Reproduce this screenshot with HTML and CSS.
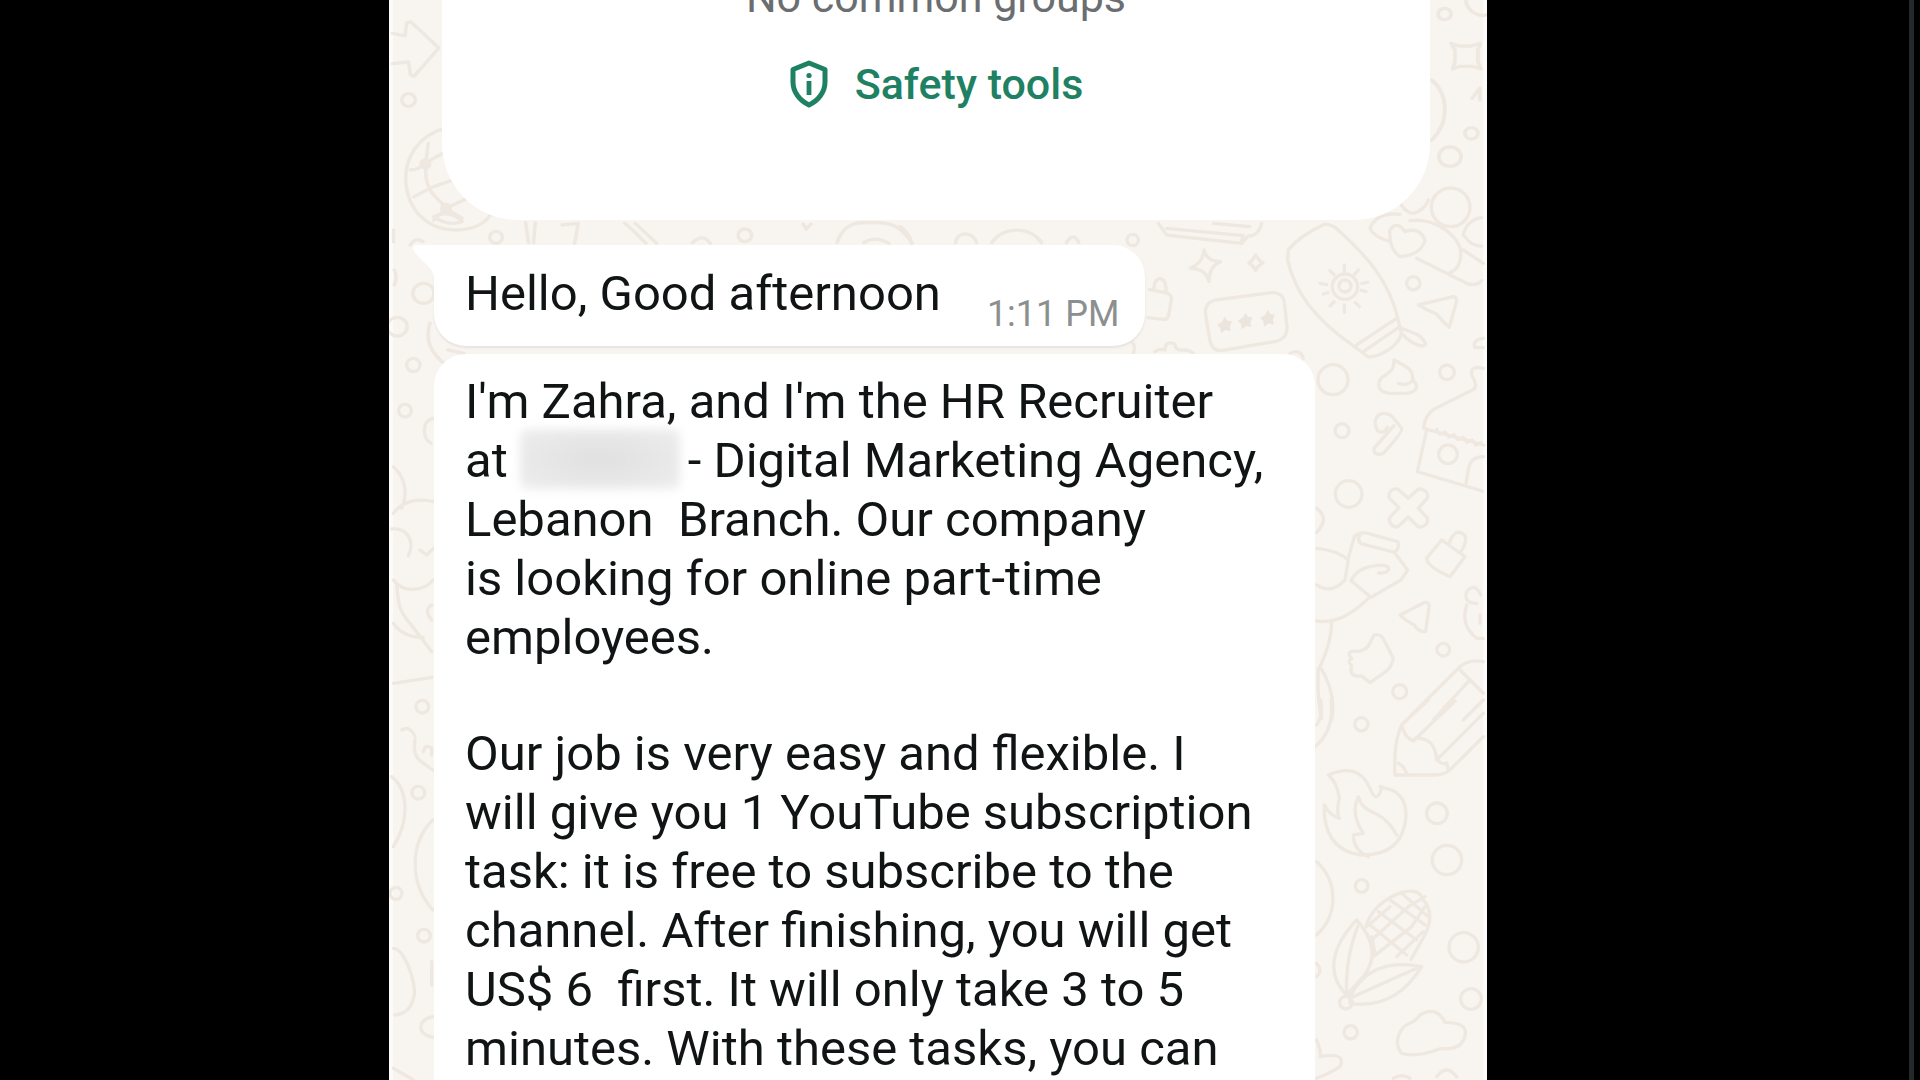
FILE: index.html
```html
<!DOCTYPE html>
<html lang="en">
<head>
<meta charset="utf-8">
<title>Chat</title>
<link rel="stylesheet" href="styles.css">
</head>
<body>
<main class="chat">
  <svg class="wallpaper" viewBox="389 0 1098 1080" preserveAspectRatio="xMidYMin slice" aria-hidden="true">
    <!-- left margin -->
    <g transform="translate(380 0) scale(.3571 .3333)">
      <path d="M35 100l35 8 5-40 12-2 78 78-70 85-10-5-5-38-45 5"/>
      <circle cx="80" cy="300" r="19"/>
      <path d="M180 385C100 410 70 480 72 540c4 90 60 150 140 150 50 0 85-20 100-50M135 430l-5 45M85 510q25 0 40-20l50-30M130 490c-10 70 20 100 55 130M95 590l55-30 55-20M185 625l60-30M150 660l35-35 45 30M150 650c25-15 60-10 80 15q-40 15-80-15z"/>
      <circle cx="127" cy="492" r="12"/><circle cx="185" cy="625" r="12"/>
      <circle cx="325" cy="712" r="18"/>
      <path d="M408 668l8 60M435 668l-5 60M510 675l45-5-10 60M685 670c25 20 40 40 60 60M715 670l60 60M875 728q30-30 50 2M1185 672l8 16 14-16M1280 728c20-70 70-60 110-60s70 10 100 62M1355 728q30-22 70 2"/>
      <circle cx="1022" cy="706" r="19"/>
      <path d="M38 690v35M85 735q15-25 35-10M40 810q10 20 0 45M140 970c-15 50 0 90 50 130M190 1050l45 10-35 25"/>
      <circle cx="122" cy="880" r="30"/><circle cx="48" cy="980" r="28"/>
    </g>
    <g transform="translate(380 330) scale(.3333)">
      <circle cx="100" cy="105" r="20"/><circle cx="75" cy="242" r="19"/>
      <path d="M158 265c-35 10-30 60-5 75M40 410c35 30 45 80 25 125M40 550c30-40 80-45 120-35M35 597c50-5 70 40 50 80M120 660l20 15 20-20M40 750c30 40 90 35 120 0M50 760c5 60 5 80 40 120l65 85M40 880c20 30 60 45 90 42M155 825q-25 15 0 45M40 1060l115-18"/>
    </g>
    <g transform="translate(380 400) scale(.3333)">
      <circle cx="127" cy="920" r="19"/><path d="M65 990q25-15 40 20"/>
    </g>
    <g transform="translate(380 740) scale(.3333)">
      <path d="M105 0c-5 30 0 50 15 62l38 28M130 35q5-25 25-10v20M35 110c50 40 55 130 5 210M158 240c-70 70-70 190 0 270M40 625c30 0 60 80 64 130-5 50-30 68-60 70M158 830c-50 10-45 55 0 62M155 665v70M40 985l60 35"/>
      <circle cx="115" cy="158" r="19"/><circle cx="132" cy="587" r="19"/><circle cx="48" cy="460" r="18"/>
    </g>
    <!-- strip between the cards and upper right -->
    <g transform="translate(900 0) scale(.3827 .3333)">
      <path d="M0 680q25 20 30 50M145 728c5-35 45-35 55 0M240 728c30-50 100-50 130 0M435 728q18-35 32 0"/>
      <circle cx="1423" cy="42" r="17"/>
      <path d="M1478 0c5 40 40 50 52 45M1440 130l20 8h32l24-8-6 20v35l8 22-22-8h-34l-18 8 6-22v-35zM1390 240c45 45 45 130 0 180M1495 295l20-30v35"/>
      <circle cx="1493" cy="400" r="17"/><circle cx="1437" cy="470" r="29"/>
    </g>
    <g transform="translate(1130 200) scale(.3333)">
      <circle cx="8" cy="120" r="17"/>
      <path d="M85 70l25 35 225 25 20-22c20 0 35-15 40-38M110 85l230 22-8 22M250 70l110 10"/>
      <path d="M222 150c5 20 20 35 50 35-25 10-35 30-35 60-5-25-20-40-57-40 25-10 40-25 42-55z"/>
      <path d="M377 165q12 20 22 24-16 8-22 22-6-14-20-22 12-8 20-24z"/>
      <path d="M58 268l48 10q20 5 18 20l-8 48q-5 14-15 12l-48-5M72 265c0-40 40-40 36 10"/>
      <path d="M255 300l170-22q32-2 38 28l8 75q2 32-28 42l-165 28q-30 4-38-28l-14-85q0-30 29-38z"/>
      <path class="solid" d="M285 350l7 12 14 2-6 14 2 16-15-4-14 10-2-16-10-10 14-8zM347 338l7 12 14 2-6 14 2 16-15-4-14 10-2-16-10-10 14-8zM414 330l7 12 14 2-6 14 2 16-15-4-14 10-2-16-10-10 14-8z"/>
      <path d="M475 150q30-40 105-76 20-4 40 12c90 80 160 160 185 275l10 40c-10 35-60 70-100 70l-40-30c-130-90-180-170-202-260zM680 435l120-80M700 455l110-75M815 385l50 20q30 25 18 32-30 5-70-38"/>
      <circle cx="645" cy="260" r="38"/><circle cx="645" cy="258" r="18"/>
      <path d="M643 195v18M643 315v22M570 250l20 4M695 250l18-3M600 212l12 12M685 210l-12 14M600 318l12-12M688 320l-12-12M580 282l14-4M708 275l-14-4"/>
      <path d="M720 85q20-50 90-42M720 85q10 25 60 40M780 90q20-30 45 5 45-15 60 25-10 45-75 50-35-25-30-80zM840 62c60-10 130 30 150 80 10 40-10 70-30 75M860 175l150 75q30 10 45-8M1000 150l60 40M1000 105q10-45 55-52M1005 110q20 30 50 28M810 5q10 30 40 35 35-10 45-40"/>
      <circle cx="962" cy="22" r="58"/><circle cx="850" cy="250" r="20"/>
      <path d="M865 315l105-25q12 2 10 14l-22 78q-25-22-38-40-30-10-55-27z"/>
      <path d="M1060 415q-35 5-25 28h25M0 420q20 15 10 40M75 455q10-10 30-5 0-30 30-18 0 20 25 18 20 0 30 10M480 460q30-15 40 15"/>
    </g>
    <!-- right margin -->
    <g transform="translate(1290 340) scale(.3333)">
      <circle cx="129" cy="119" r="45"/><circle cx="156" cy="272" r="21"/><circle cx="471" cy="97" r="22"/>
      <path d="M312 60c40 20 60 30 55 60 25 20 10 38-20 40h-50c-40-5-38-40-10-55 20-15 25-20 25-45zM325 130q30 10 45-12"/>
      <path d="M262 272c-25-50 30-70 53-32l20 25q5 10-55 75-30 10-28-15l60-68M262 272q20 12 30-10"/>
      <path d="M580 85q-40-10-35 20 18 30 8 42l-120 60q-30 20-32 58l180 50M410 270l-28 125 195 58M440 268l10 15 15-7 12 15 15-7 12 15 15-7 12 15 15-7 12 15 15-7M580 350q-40 0-45 40l-8 48"/>
      <circle cx="474" cy="343" r="28"/><circle cx="176" cy="462" r="40"/>
      <path d="M355 475l30-28q30 0 28 26l-28 32 28 30q0 28-28 26l-30-30-32 30q-28-2-24-28l28-30-30-30q-2-28 26-26z"/>
      <path d="M80 505q40 30 0 72M80 625q60 5 95 35l-10 60q-40 45-85 15M175 655l18-65q15-15 40-10l90 25q8 15-8 32l-100-25q-15-10-5-28M315 640l38 50-20 30-90 52-60-50q20-40 75-45 40-5 38 12-5 10-30 10M235 775q-80 80-155 68M125 845q0 60-35 135 50 80 35 160M85 985q-5 80 10 150"/>
      <path d="M455 600l70 50-45 60q-70-30-70-55zM478 608q20-50 48-20 5 20-15 50M330 825l75-38q15 0 12 15l-10 72q-20 5-35-20-30-15-42-29z"/>
      <path d="M252 885q20-5 30 15l28 55q-5 30-30 45l-40 28-25-20q-40 5-30-30-15-15 0-22-20-25 15-22 20 0 35-15z"/>
      <circle cx="460" cy="929" r="19"/><circle cx="329" cy="1055" r="21"/>
      <path d="M560 790q-40 0-30-35 25-30 42 10M530 795q-20 60 30 100h20M570 825v25M350 1140l150-150q30-35 80-25M430 1140l105-115M505 985l75 75M520 1140l60-60"/>
    </g>
    <g transform="translate(1290 700) scale(.3333)">
      <path d="M350 60l-15 15q-25 50-20 150h120q30 0 50-20l95-95M335 75q10 40 35 48l125-120M350 60l65-60M375 115q60-5 65 65l140-140M440 178q20 20 30 10l5 20M325 190q15 5 25 30M75 140q60-50 48-140M80 75q20-30 12-75"/>
      <path d="M115 225q90-40 125 40 20 50 35 0-10-10 5-2 70 12 68 87-10 120-140 115-110-20-105-150 15 30 45 40-10-20 0-60-5-45-33-70zM205 290c15 60 70 30 115 115M205 290q-25 50 15 110l-30 5q0 45 45 65"/>
      <circle cx="214" cy="73" r="20"/><circle cx="441" cy="340" r="31"/><circle cx="471" cy="480" r="44"/><circle cx="215" cy="558" r="19"/><circle cx="521" cy="742" r="44"/><circle cx="543" cy="897" r="31"/><circle cx="182" cy="997" r="20"/>
      <path d="M80 485c65 60 65 160 0 220M80 790q20 20 0 40"/>
      <path d="M170 885c-60-60-50-140 30-225 55 60 60 120 20 170zM170 885q-5-110 35-210M180 890q60-120 215-90-80 130-215 110zM190 890l190-85"/>
      <circle cx="168" cy="908" r="19"/>
      <path d="M228 680q20-70 105-102 55-15 65 20 40 40 5 110l-40 70M240 675l110 90M265 635l115 85M300 600l105 75M335 580l80 70M245 720l110-100 50-30M250 770l115-90 40-60M320 770l80-75M230 680l70-60M255 760l-10-50"/>
      <path d="M360 970q20-10 30-25 50-30 75 22 70 0 60 40-10 45-70 38-80 30-120 15c-30-35 0-85 25-90z"/>
      <path d="M80 1020q15 40 10 50 80-15 60 30-30 20-70 35M310 1135q25-15 50 0M440 1130q30-40 60 0"/>
    </g>
  </svg>

  <section class="contact-card">
    <p class="groups">No common groups</p>
    <button class="safety" type="button">
      <svg class="shield" viewBox="0 0 40 48" aria-hidden="true">
        <path d="M20 3L36 9.500V22C36 32 29.500 40.500 20 45C10.500 40.500 4 32 4 22V9.500Z"/>
        <circle cx="20" cy="15.500" r="2.600"/>
        <rect x="17.600" y="21" width="4.800" height="14"/>
      </svg>
      <span>Safety tools</span>
    </button>
  </section>

  <article class="bubble greeting">
    <svg class="tail" viewBox="0 0 24 34" aria-hidden="true"><path d="M24 0H4Q-1 1 2 6Q6 12 14 19Q22 26 22 34H24Z"/></svg>
    <p>Hello, Good afternoon</p>
    <time>1:11 PM</time>
  </article>

  <article class="bubble offer">
    <p>I'm Zahra, and I'm the HR Recruiter
at <span class="redacted"></span>- Digital Marketing Agency,
Lebanon  Branch. Our company
is looking for online part-time
employees.</p>
    <p>Our job is very easy and flexible. I
will give you 1 YouTube subscription
task: it is free to subscribe to the
channel. After finishing, you will get
US$ 6  first. It will only take 3 to 5
minutes. With these tasks, you can</p>
  </article>
</main>
<div class="divider"></div>
</body>
</html>
```
FILE: styles.css
```css
* {
  box-sizing: border-box;
}

body {
  margin: 0;
  min-height: 100vh;
  display: grid;
  grid-template-columns: minmax(0, 389fr) minmax(0, 1098fr) minmax(0, 422fr) 5px 6px;
  background: #000;
  color: #111415;
  font-family: Roboto, "Noto Sans", sans-serif;
  font-size: 49px;
  line-height: 59px;
}

p {
  margin: 0;
}

.chat {
  grid-column: 2;
  position: relative;
  display: flex;
  flex-direction: column;
  align-items: flex-start;
  overflow: hidden;
  padding: 0 57px 0 45px;
  background: #f8f4ef;
  box-shadow: inset 4px 0 #fdfbf9, inset -4px 0 #fdfbf9;
}

.wallpaper {
  position: absolute;
  inset: 0;
  width: 100%;
  height: 100%;
  fill: none;
  stroke: #eee8e1;
  stroke-width: 10;
  stroke-linecap: round;
  stroke-linejoin: round;
}

.wallpaper .solid {
  fill: #ece5de;
  stroke: none;
}

.contact-card {
  position: relative;
  align-self: stretch;
  display: flex;
  flex-direction: column;
  align-items: center;
  gap: 39px;
  margin-left: 8px;
  padding-bottom: 112px;
  border-radius: 0 0 76px 76px;
  background: #fff;
  font-size: 43px;
  line-height: 48px;
}

.groups {
  margin-top: -27px;
  color: #6b6e70;
}

.safety {
  display: flex;
  align-items: center;
  gap: 26px;
  padding: 0;
  border: 0;
  background: none;
  color: #1f8163;
  font: inherit;
  font-weight: 500;
}

.shield {
  width: 40px;
  height: 48px;
  fill: #1f8163;
}

.shield path {
  fill: none;
  stroke: #1f8163;
  stroke-width: 5;
  stroke-linejoin: round;
}

.bubble {
  position: relative;
  border-radius: 32px;
  background: #fff;
  white-space: pre;
}

.greeting {
  display: flex;
  align-items: flex-end;
  gap: 46px;
  margin-top: 25px;
  padding: 19px 26px 23px 31px;
  border-top-left-radius: 0;
  box-shadow: 0 2px 2px #e6e4e2;
}

.greeting time {
  color: #8c8f90;
  font-size: 36px;
  line-height: 40px;
  margin-bottom: -11px;
}

.tail {
  position: absolute;
  top: 0;
  left: -22px;
  width: 24px;
  height: 34px;
  fill: #fff;
}

.offer {
  flex: 1;
  display: flex;
  flex-direction: column;
  gap: 57px;
  margin-top: 8px;
  padding: 18px 52px 0 31px;
  border-bottom-left-radius: 0;
  border-bottom-right-radius: 0;
}

.redacted {
  display: inline-block;
  width: 160px;
  height: 60px;
  margin: -8px 8px 0 0;
  vertical-align: -12px;
  border-radius: 8px;
  background: radial-gradient(#e0e0e0, #eee);
  filter: blur(5px);
}

.divider {
  grid-column: 4;
  background: #23292b;
}
```
